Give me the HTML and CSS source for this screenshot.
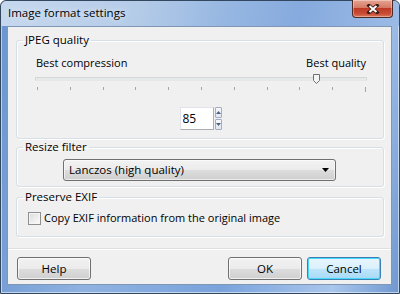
FILE: index.html
```html
<!DOCTYPE html>
<html lang="en">
  <head>
    <meta charset="UTF-8" />
    <title>Image format settings</title>
    <link rel="stylesheet" href="styles.css">
  </head>
  <body>
    <div class="window">
      <div class="titlebar">
        <span class="title">Image format settings</span>
        <div class="close">
          <svg width="14" height="10" viewBox="0 0 14 10">
            <path d="M3 1.5 L11 8.5 M11 1.5 L3 8.5" stroke="#3a1a14" stroke-width="3.6" stroke-linecap="square" />
            <path d="M3.5 2 L10.5 8 M10.5 2 L3.5 8" stroke="#fff" stroke-width="2" />
          </svg>
        </div>
      </div>

      <div class="client">
        <fieldset class="group group-jpeg">
          <legend>JPEG quality</legend>
          <div class="slider-labels">
            <span>Best compression</span>
            <span>Best quality</span>
          </div>
          <div class="slider">
            <div class="track"></div>
            <svg class="thumb" style="left: 85%" width="7" height="10" viewBox="0 0 7 10">
              <path d="M0.5 0.5 H6.5 V6.5 L3.5 9.5 L0.5 6.5 Z" fill="#f4f4f4" stroke="#707070" />
            </svg>
            <div class="ticks">
              <span></span><span></span><span></span><span></span><span></span><span></span>
              <span></span><span></span><span></span><span></span><span class="last"></span>
            </div>
          </div>
          <div class="spin-row">
            <div class="spin">
              <input type="text" value="85" />
              <div class="spin-btns">
                <div class="spin-btn">
                  <svg width="5" height="3" viewBox="0 0 5 3"><path d="M0 3 L2.5 0 L5 3 Z" fill="#4d6185" /></svg>
                </div>
                <div class="spin-btn">
                  <svg width="5" height="3" viewBox="0 0 5 3"><path d="M0 0 L2.5 3 L5 0 Z" fill="#4d6185" /></svg>
                </div>
              </div>
            </div>
          </div>
        </fieldset>

        <fieldset class="group group-resize">
          <legend>Resize filter</legend>
          <div class="combo">
            <span>Lanczos (high quality)</span>
            <svg width="7" height="4" viewBox="0 0 7 4"><path d="M0 0 H7 L3.5 4 Z" fill="#000" /></svg>
          </div>
        </fieldset>

        <fieldset class="group group-exif">
          <legend>Preserve EXIF</legend>
          <label class="check">
            <span class="box"></span>
            <span>Copy EXIF information from the original image</span>
          </label>
        </fieldset>

        <div class="separator"></div>

        <div class="buttons">
          <button class="btn">Help</button>
          <span class="spacer"></span>
          <button class="btn">OK</button>
          <button class="btn btn-default">Cancel</button>
        </div>
      </div>
    </div>
  </body>
</html>
```

FILE: styles.css
```css
* {
  box-sizing: border-box;
  margin: 0;
  padding: 0;
}
body {
  font-family: "Open Sans", "Noto Sans", sans-serif;
  font-size: 11px;
  line-height: 16px;
  color: #000;
  background: #fff;
}

/* window frame */
.window {
  width: 400px;
  height: 294px;
  display: flex;
  flex-direction: column;
  background: linear-gradient(100deg, #6a95cf 0%, #8fb2e1 30%, #7aa3dc 60%, #a9c6ec 85%, #6f98d0 100%);
  border: 1px solid #33475f;
  border-radius: 6px 6px 0 0;
  box-shadow: inset 0 0 0 1px rgba(255, 255, 255, 0.55);
}
.titlebar {
  height: 25px;
  display: flex;
  align-items: flex-start;
  justify-content: space-between;
  padding-left: 7px;
  background: linear-gradient(100deg, #c6d8ee 0%, #b4cbe8 35%, #98b8e2 55%, #86aade 75%, #9cbbe6 100%);
  border-radius: 6px 6px 0 0;
}
.title {
  margin-top: 4px;
  font-size: 11.5px;
  text-shadow: 0 0 6px rgba(255, 255, 255, 0.9);
}
.close {
  width: 41px;
  height: 18px;
  margin-right: 6px;
  margin-top: -1px;
  display: flex;
  align-items: center;
  justify-content: center;
  border: 1px solid #4f2a24;
  border-top: none;
  border-radius: 0 0 4px 4px;
  background: linear-gradient(#e8a493 0%, #d47a66 45%, #bf3a25 50%, #c84c33 80%, #d9785a 100%);
  box-shadow: inset 0 0 0 1px rgba(255, 255, 255, 0.35);
}

.client {
  flex: 1;
  margin: 0 7px 8px 6px;
  background: #f0f0f0;
  border: 1px solid #7f96b4;
  display: flex;
  flex-direction: column;
}

/* group boxes */
.group {
  margin: 0 7px 0 8px;
  border: 1px solid #d5dfe5;
  border-radius: 3px;
  box-shadow: inset 1px 1px 0 #fff, 1px 1px 0 #fff;
}
.group legend {
  margin-left: 6px;
  padding: 0 2px;
  line-height: 16px;
  font-size: 11.5px;
}
.group-jpeg {
  margin-top: 5px;
  padding-bottom: 8px;
}
.group-resize {
  margin-top: 0;
  padding-bottom: 5px;
}
.group-exif {
  margin-top: 2px;
  padding-bottom: 10px;
}

.slider-labels {
  display: flex;
  justify-content: space-between;
  margin: 7px 17px 0 19px;
}
.slider {
  position: relative;
  margin: 6px 16px 0 18px;
}
.track {
  height: 4px;
  border: 1px solid #d6d6d6;
  border-bottom-color: #e7e7e7;
  background: #e7eaea;
  border-radius: 1px;
}
.thumb {
  position: absolute;
  top: -3px;
  margin-left: -4px;
}
.ticks {
  display: flex;
  justify-content: space-between;
  align-items: flex-start;
  margin-top: 6px;
  padding: 0 1px 0 2px;
  height: 5px;
}
.ticks span {
  width: 1px;
  height: 3px;
  background: #a5a5a5;
}
.ticks span.last {
  height: 5px;
}

.spin-row {
  display: flex;
  justify-content: center;
  margin-top: 15px;
  padding-left: 1px;
}
.spin {
  display: flex;
  height: 23px;
}
.spin input {
  width: 34px;
  height: 23px;
  border: 1px solid #abadb3;
  border-top-color: #e2e3ea;
  border-left-color: #e2e3ea;
  background: #fff;
  font: inherit;
  font-size: 12px;
  padding: 0 2px;
  outline: none;
}
.spin-btns {
  display: flex;
  flex-direction: column;
  gap: 1px;
  margin-left: 1px;
  width: 7px;
}
.spin-btn {
  flex: 1;
  display: flex;
  align-items: center;
  justify-content: center;
  border: 1px solid #a3aec4;
  border-radius: 1px;
  background: linear-gradient(#f8f9fb, #e1e6ef);
}

.combo {
  margin: 4px 0 0 46px;
  width: 273px;
  height: 22px;
  display: flex;
  align-items: center;
  justify-content: space-between;
  padding: 0 6px 0 5px;
  font-size: 11.5px;
  border: 1px solid #707070;
  border-radius: 3px;
  background: linear-gradient(#f2f2f2 0%, #ebebeb 50%, #dddddd 51%, #cfcfcf 100%);
  box-shadow: inset 0 0 0 1px rgba(255, 255, 255, 0.6);
}

.check {
  display: flex;
  align-items: center;
  gap: 3px;
  margin: 5px 0 0 11px;
  height: 16px;
}
.check .box {
  width: 13px;
  height: 13px;
  border: 1px solid #8f8f8f;
  background: linear-gradient(135deg, #dcdcdc, #fbfbfb);
  box-shadow: inset 0 0 0 1px #f4f4f4;
}

.separator {
  margin-top: 11px;
  height: 2px;
  border-top: 1px solid #dfdfdf;
  border-bottom: 1px solid #fff;
}

.buttons {
  display: flex;
  gap: 5px;
  margin-top: 7px;
  padding: 0 10px 0 9px;
}
.spacer {
  flex: 1;
}
.btn {
  width: 74px;
  height: 23px;
  font: inherit;
  font-size: 11.5px;
  color: #000;
  border: 1px solid #707070;
  border-radius: 3px;
  background: linear-gradient(#f2f2f2 0%, #ebebeb 50%, #dddddd 51%, #cfcfcf 100%);
  box-shadow: inset 0 0 0 1px rgba(255, 255, 255, 0.7);
}
.btn-default {
  border-color: #3c7fb1;
  background: linear-gradient(#eaf6fd 0%, #d9f0fc 50%, #bee6fd 51%, #a7d9f5 100%);
  box-shadow: inset 0 0 0 1px #48d8fb;
}
```
